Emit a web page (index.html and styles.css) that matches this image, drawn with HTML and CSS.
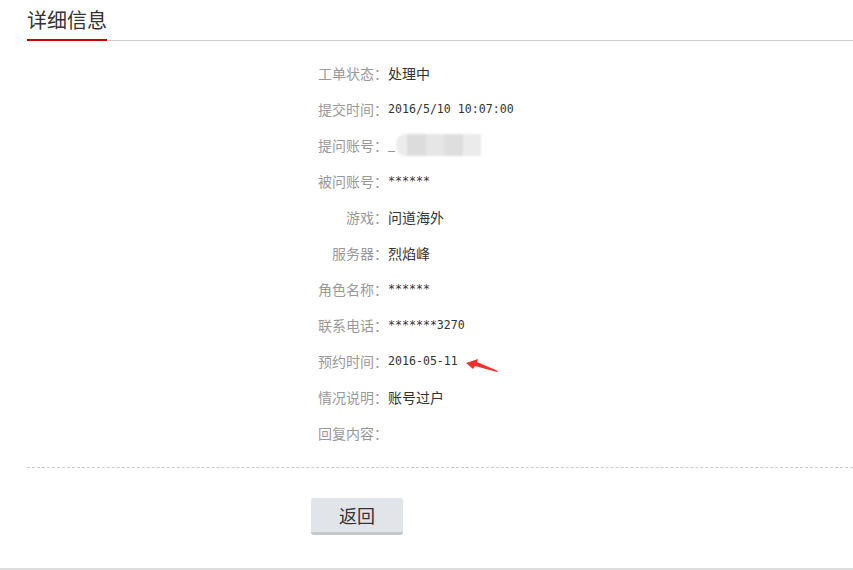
FILE: index.html
```html
<!DOCTYPE html>
<html lang="zh-CN">

<head>
  <meta charset="UTF-8" />
  <title>详细信息</title>
  <link rel="stylesheet" href="styles.css">
</head>

<body>
  <div class="title-bar">
    <h2 class="title">详细信息</h2>
  </div>

  <div class="info">
    <div class="row"><span class="label">工单状态：</span><span class="value">处理中</span></div>
    <div class="row"><span class="label">提交时间：</span><span class="value num">2016/5/10 10:07:00</span></div>
    <div class="row"><span class="label">提问账号：</span><span class="value num">_</span><span class="blurred"><i></i><i></i><i></i><i></i><i></i></span></div>
    <div class="row"><span class="label">被问账号：</span><span class="value num">******</span></div>
    <div class="row"><span class="label">游戏：</span><span class="value">问道海外</span></div>
    <div class="row"><span class="label">服务器：</span><span class="value">烈焰峰</span></div>
    <div class="row"><span class="label">角色名称：</span><span class="value num">******</span></div>
    <div class="row"><span class="label">联系电话：</span><span class="value num">*******3270</span></div>
    <div class="row">
      <span class="label">预约时间：</span><span class="value num">2016-05-11</span>
      <svg class="arrow" width="33" height="18" viewBox="0 0 33 18">
        <polygon points="0,7 12,3 11,6 32,15 31,16 9,10 7,13" fill="#f0302e" />
      </svg>
    </div>
    <div class="row"><span class="label">情况说明：</span><span class="value">账号过户</span></div>
    <div class="row"><span class="label">回复内容：</span><span class="value"></span></div>
  </div>

  <div class="actions">
    <button class="back-button">返回</button>
  </div>

  <div class="footer"></div>
</body>

</html>
```

FILE: styles.css
```css
body {
  margin: 0;
  font-family: "Noto Sans CJK SC", "Noto Sans", sans-serif;
  color: #333;
  background: #fff;
}

.title-bar {
  display: flex;
  margin-left: 27px;
  border-bottom: 1px solid #ccc;
}

.title {
  margin: 0 0 -1px 0;
  height: 39px;
  line-height: 39px;
  font-size: 20px;
  font-weight: normal;
  color: #333;
  border-bottom: 2px solid #c80000;
}

.info {
  margin-left: 27px;
  padding: 14px 0 16px 291px;
  border-bottom: 1px dashed #ccc;
}

.row {
  display: flex;
  align-items: center;
  height: 36px;
  font-size: 14px;
}

.label {
  width: 70px;
  text-align: right;
  color: #999;
}

.value {
  color: #333;
}

.num {
  font-family: "DejaVu Sans Mono", monospace;
  font-size: 11.6px;
}

.blurred {
  display: flex;
  width: 85px;
  height: 22px;
  margin-left: 1px;
  filter: blur(1.2px);
}

.blurred i {
  flex: 1;
  background: #dcdcdc;
}

.blurred i:nth-child(1) {
  flex: 0.6;
  background: #ececec;
  border-radius: 9px 0 0 9px;
}

.blurred i:nth-child(3) {
  background: #e6e6e6;
}

.blurred i:nth-child(4) {
  background: #dedede;
}

.blurred i:nth-child(5) {
  background: #ebebeb;
}

.arrow {
  margin-left: 8px;
  margin-top: 8px;
}

.actions {
  padding: 30px 0 33px 311px;
}

.back-button {
  display: block;
  width: 92px;
  height: 37px;
  padding: 0;
  border: none;
  border-bottom: 3px solid #c6c7c9;
  border-radius: 3px;
  background: #e1e4e8;
  font-family: "Noto Sans CJK SC", sans-serif;
  font-size: 18px;
  color: #333;
  cursor: pointer;
}

.footer {
  border-top: 2px solid #ddd;
}
```
